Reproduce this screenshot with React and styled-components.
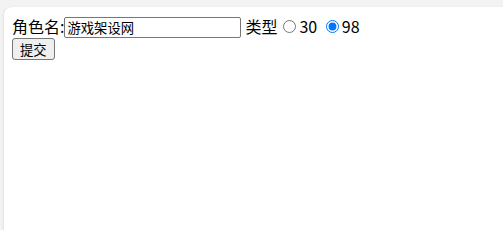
import React from 'react';
import styled, { createGlobalStyle } from 'styled-components'

const GlobalStyle = createGlobalStyle`
  html, body {
    margin: 0;
    height: 100%;
    background-color: #f3f3f3;
  }
  #root {
    height: 100%;
  }
`

const Frame = styled.div`
  display: flex;
  flex-direction: column;
  height: 100%;
  padding: 7px 0 0 4px;
  box-sizing: border-box;
`

const Page = styled.div`
  flex: 1;
  background-color: #fff;
  border-top-left-radius: 8px;
  box-shadow: -1px 0 2px rgba(0, 0, 0, 0.08);
  padding: 8px;
  font-family: "Microsoft YaHei", "Noto Sans CJK SC", sans-serif;
  font-size: 16px;
  color: #000;
`

const Form = styled.form`
  margin: 0;
  line-height: 23px;
`

const NameInput = styled.input`
  font-family: "Noto Sans CJK SC", sans-serif;
  font-size: 13.33px;
  width: 177px;
  height: 21px;
  box-sizing: border-box;
  padding: 1px 2px;
  border: 1px solid #767676;
  border-radius: 2px;
  margin: 0 4px 0 0;
  line-height: 17px;
`

const Radio = styled.input`
  width: 13px;
  height: 13px;
  margin: 3px 3px 0 ${p => p.$first ? 6 : 5}px;
  accent-color: #0075ff;
`

const Submit = styled.button`
  font-family: "Noto Sans CJK SC", sans-serif;
  font-size: 13.33px;
  line-height: 17px;
  padding: 1px 7px;
  height: 22px;
  background-color: #efefef;
  border: 1px solid #767676;
  border-radius: 3px;
  color: #000;
  display: block;
`

const App = () => {
  return (
    <Frame>
      <GlobalStyle />
      <Page>
        <Form onSubmit={e => e.preventDefault()}>
          角色名:<NameInput type="text" defaultValue="游戏架设网" />类型
          <Radio type="radio" name="type" value="30" $first />30{' '}
          <Radio type="radio" name="type" value="98" defaultChecked />98
          <Submit type="submit">提交</Submit>
        </Form>
      </Page>
    </Frame>
  )
}

export default App
